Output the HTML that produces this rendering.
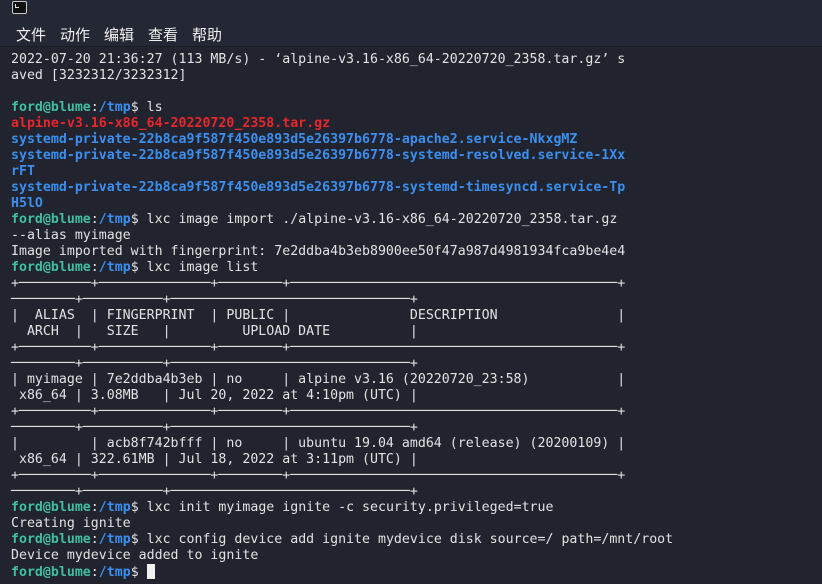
<!DOCTYPE html>
<html><head><meta charset="utf-8"><style>
html,body{margin:0;padding:0;width:822px;height:584px;overflow:hidden;background:#21242e;}
.top{position:absolute;left:0;top:0;width:822px;height:46px;background:#242834;border-bottom:1px solid #1a1c23;}
.icon{position:absolute;left:12px;top:1px;width:13px;height:11px;border:1px solid #c8c8c8;border-radius:2px;background:#111;}
.icon:after{content:"";position:absolute;left:2px;top:2px;width:3px;height:3px;border-left:1px solid #ddd;border-bottom:1px solid #ddd;}
.menu{position:absolute;top:24px;font:15px "Noto Sans CJK SC",sans-serif;color:#f0f0f0;}
pre{position:absolute;left:11px;top:52px;margin:0;font:13.25px/16px "DejaVu Sans Mono","Liberation Mono",monospace;color:#e2e2e2;}
.g{color:#3fbfa0;font-weight:bold}.b{color:#3a8ff0;font-weight:bold}.r{color:#e8262b;font-weight:bold}
.cur{display:inline-block;width:8px;height:15px;background:#f0f0f0;vertical-align:-3px;}
</style></head><body>
<div class="top"><div class="icon"></div>
<div class="menu" style="left:16px">文件</div><div class="menu" style="left:60px">动作</div><div class="menu" style="left:104px">编辑</div><div class="menu" style="left:148px">查看</div><div class="menu" style="left:192px">帮助</div></div>
<pre>2022-07-20 21:36:27 (113 MB/s) - ‘alpine-v3.16-x86_64-20220720_2358.tar.gz’ s
aved [3232312/3232312]

<span class="g">ford@blume</span>:<span class="b">/tmp</span>$ ls
<span class="r">alpine-v3.16-x86_64-20220720_2358.tar.gz</span>
<span class="b">systemd-private-22b8ca9f587f450e893d5e26397b6778-apache2.service-NkxgMZ</span>
<span class="b">systemd-private-22b8ca9f587f450e893d5e26397b6778-systemd-resolved.service-1Xx
rFT</span>
<span class="b">systemd-private-22b8ca9f587f450e893d5e26397b6778-systemd-timesyncd.service-Tp
H5lO</span>
<span class="g">ford@blume</span>:<span class="b">/tmp</span>$ lxc image import ./alpine-v3.16-x86_64-20220720_2358.tar.gz
--alias myimage
Image imported with fingerprint: 7e2ddba4b3eb8900ee50f47a987d4981934fca9be4e4
<span class="g">ford@blume</span>:<span class="b">/tmp</span>$ lxc image list
+─────────+──────────────+────────+─────────────────────────────────────────+
────────+──────────+──────────────────────────────+
|  ALIAS  | FINGERPRINT  | PUBLIC |               DESCRIPTION               |
  ARCH  |   SIZE   |         UPLOAD DATE          |
+─────────+──────────────+────────+─────────────────────────────────────────+
────────+──────────+──────────────────────────────+
| myimage | 7e2ddba4b3eb | no     | alpine v3.16 (20220720_23:58)           |
 x86_64 | 3.08MB   | Jul 20, 2022 at 4:10pm (UTC) |
+─────────+──────────────+────────+─────────────────────────────────────────+
────────+──────────+──────────────────────────────+
|         | acb8f742bfff | no     | ubuntu 19.04 amd64 (release) (20200109) |
 x86_64 | 322.61MB | Jul 18, 2022 at 3:11pm (UTC) |
+─────────+──────────────+────────+─────────────────────────────────────────+
────────+──────────+──────────────────────────────+
<span class="g">ford@blume</span>:<span class="b">/tmp</span>$ lxc init myimage ignite -c security.privileged=true
Creating ignite
<span class="g">ford@blume</span>:<span class="b">/tmp</span>$ lxc config device add ignite mydevice disk source=/ path=/mnt/root
Device mydevice added to ignite
<span class="g">ford@blume</span>:<span class="b">/tmp</span>$ <span class="cur"></span></pre>
</body></html>
